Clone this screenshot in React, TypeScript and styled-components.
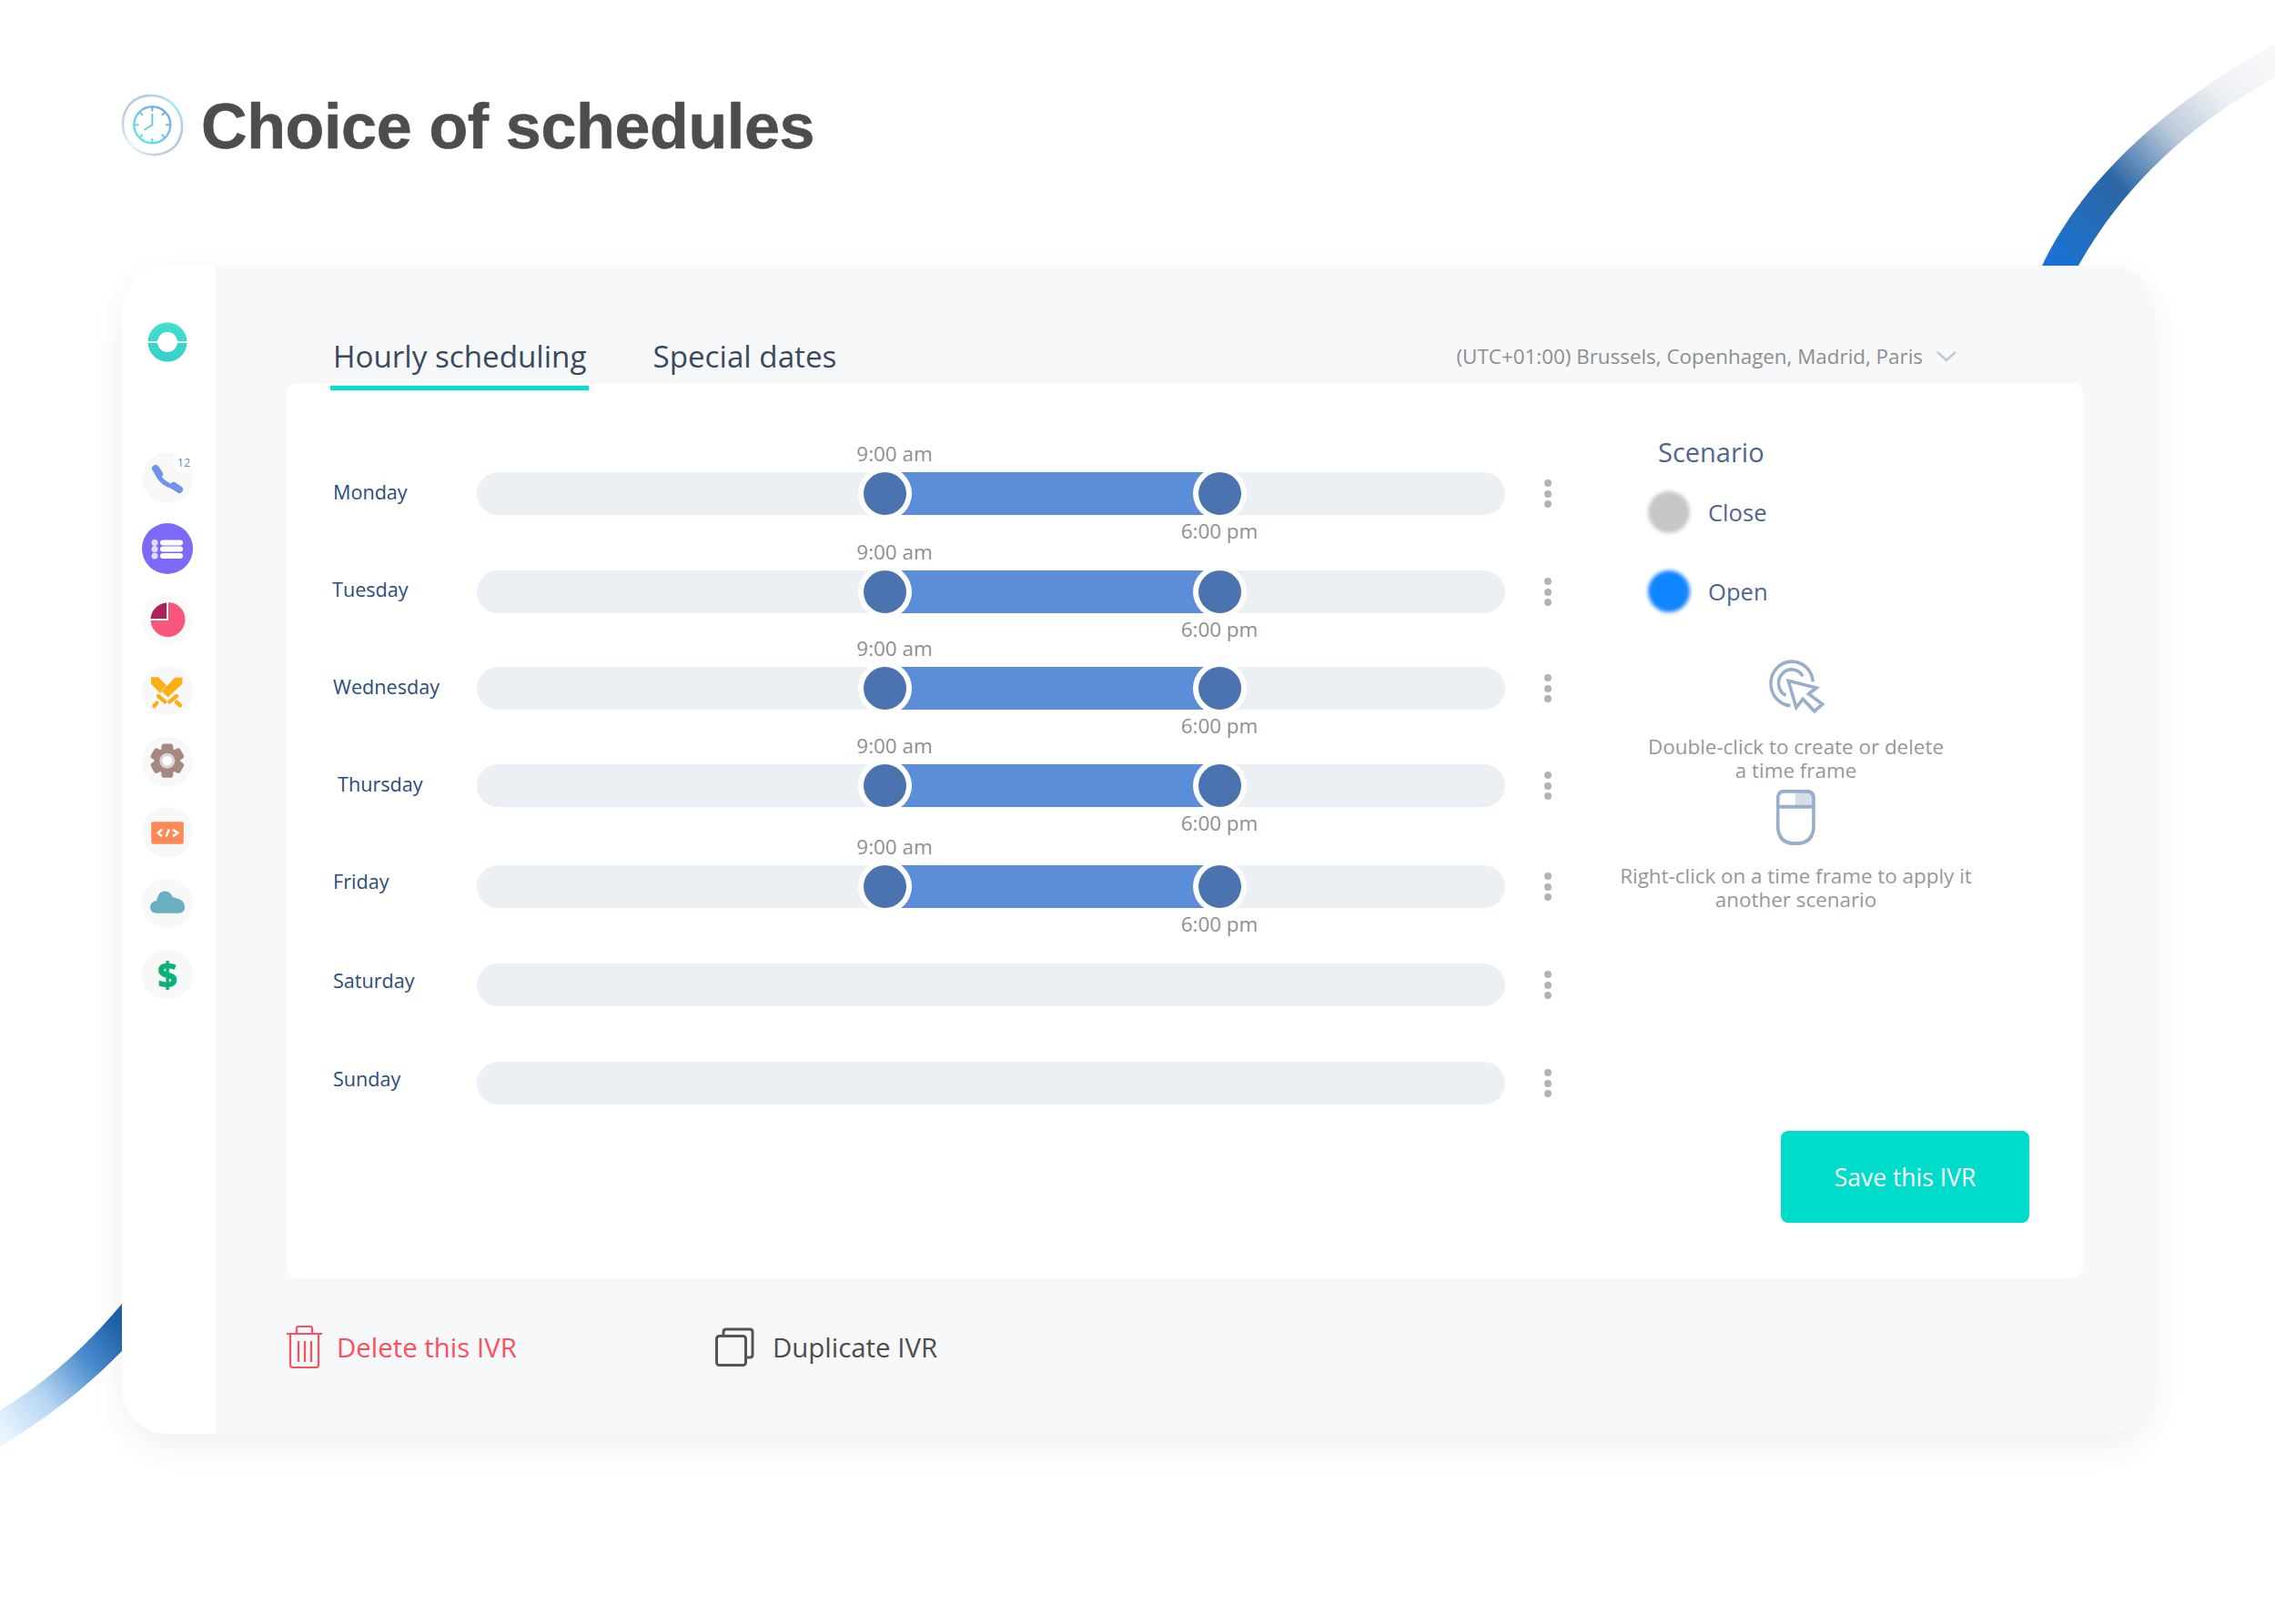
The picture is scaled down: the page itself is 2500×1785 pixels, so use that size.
import styled, { createGlobalStyle } from 'styled-components';

const GlobalStyle = createGlobalStyle`
	html, body {
		margin: 0;
		padding: 0;
		background: #ffffff;
		font-family: 'Open Sans', 'Liberation Sans', sans-serif;
	}
`;

const days = [
	{ name: 'Monday', gap: 0, nudge: 0, lift: 2, open: true },
	{ name: 'Tuesday', gap: 61, nudge: -1, lift: 3, open: true },
	{ name: 'Wednesday', gap: 59, nudge: 0, lift: 2, open: true },
	{ name: 'Thursday', gap: 60, nudge: 5, lift: 2, open: true },
	{ name: 'Friday', gap: 64, nudge: 0, lift: 6, open: true },
	{ name: 'Saturday', gap: 61, nudge: 0, lift: 5, open: false },
	{ name: 'Sunday', gap: 61, nudge: 0, lift: 5, open: false },
];

const Page = styled.div`
	position: relative;
	width: 2500px;
	height: 1785px;
	overflow: hidden;
	padding: 102px 0 0 132px;
	box-sizing: border-box;
	background: #ffffff;
`;

const Swoosh = styled.svg`
	position: absolute;
	left: 0;
	top: 0;
`;

const Header = styled.header`
	position: relative;
	display: flex;
	align-items: center;
	gap: 18px;
	height: 71px;
`;

const Title = styled.h1`
	margin: 3px 0 0;
	font-family: 'Liberation Sans', Arial, sans-serif;
	font-size: 70px;
	font-weight: 700;
	letter-spacing: -0.35px;
	-webkit-text-stroke: 0.6px #4d4d4d;
	color: #4d4d4d;
	line-height: 71px;
`;

const Card = styled.div`
	position: relative;
	display: flex;
	width: 2233px;
	height: 1284px;
	margin: 119px 0 0 2px;
	border-radius: 50px;
	overflow: hidden;
	background: #f7f8fa;
	box-shadow: 0 14px 36px rgba(40, 50, 70, 0.07);
`;

const Sidebar = styled.nav`
	width: 103px;
	flex-shrink: 0;
	display: flex;
	flex-direction: column;
	align-items: center;
	padding: 62px 3px 0 0;
	background: #ffffff;
	box-sizing: border-box;
`;

const Logo = styled.svg`
	width: 44px;
	height: 44px;
	margin-bottom: 99px;
`;

const NavList = styled.div`
	display: flex;
	flex-direction: column;
	align-items: center;
	gap: 22px;
`;

const Bubble = styled.div<{ $bg?: string }>`
	position: relative;
	width: 56px;
	height: 56px;
	border-radius: 50%;
	background: ${(p) => p.$bg || '#f8f8f8'};
	display: flex;
	align-items: center;
	justify-content: center;
	svg {
		display: block;
	}
`;

const Badge = styled.span`
	position: absolute;
	top: 1px;
	right: -1px;
	width: 22px;
	height: 22px;
	border-radius: 50%;
	background: #ffffff;
	color: #5f86e4;
	font-size: 12.5px;
	line-height: 22px;
	text-align: center;
`;

const DollarGlyph = styled.span`
	font-family: 'Open Sans', sans-serif;
	font-weight: 800;
	font-size: 38px;
	line-height: 56px;
	color: #0cb17a;
`;

const Main = styled.main`
	flex: 1;
	min-width: 0;
	display: flex;
	flex-direction: column;
	padding: 0 78px;
`;

const TabBar = styled.div`
	display: flex;
	align-items: center;
	height: 129px;
	padding: 70px 138px 0 51px;
	box-sizing: border-box;
`;

const Tab = styled.div<{ $active?: boolean }>`
	position: relative;
	font-size: 33.2px;
	line-height: 44px;
	color: #3a4a5e;
	margin-right: 73px;
	&::after {
		content: '';
		display: ${(p) => (p.$active ? 'block' : 'none')};
		position: absolute;
		z-index: 2;
		left: -3px;
		right: -3px;
		top: 54px;
		height: 5px;
		background: #00e0d0;
	}
`;

const Timezone = styled.div`
	margin-left: auto;
	display: flex;
	align-items: center;
	gap: 14px;
	font-size: 22.4px;
	color: #8e8e8e;
`;

const Panel = styled.section`
	position: relative;
	display: flex;
	height: 984px;
	background: #ffffff;
	border-radius: 12px;
	padding: 0 59px 61px 50px;
	box-sizing: border-box;
`;

const Rows = styled.div`
	width: 1352px;
	flex-shrink: 0;
	padding-top: 98px;
`;

const Row = styled.div<{ $gap: number }>`
	display: flex;
	align-items: center;
	height: 47px;
	margin-top: ${(p) => p.$gap}px;
`;

const DayLabel = styled.div<{ $nudge: number; $lift: number }>`
	width: 159px;
	flex-shrink: 0;
	padding-left: ${(p) => 1 + p.$nudge}px;
	padding-bottom: ${(p) => p.$lift * 2}px;
	box-sizing: border-box;
	font-size: 21.6px;
	color: #2a4d7a;
`;

const Track = styled.div`
	position: relative;
	width: 1130px;
	height: 47px;
	border-radius: 24px;
	background: #ebf0f4;
`;

const Fill = styled.div`
	position: absolute;
	left: 448px;
	width: 368px;
	top: 0;
	bottom: 0;
	background: #5b8dd9;
`;

const Thumb = styled.div<{ $left: number }>`
	position: absolute;
	left: ${(p) => p.$left}px;
	top: 50%;
	width: 47px;
	height: 47px;
	margin: -23.5px 0 0 -23.5px;
	border-radius: 50%;
	background: #4a73b0;
	box-shadow: 0 0 0 6px #ffffff;
`;

const TimeLabel = styled.span<{ $left: number; $top: number }>`
	position: absolute;
	left: ${(p) => p.$left}px;
	top: ${(p) => p.$top}px;
	transform: translateX(-50%);
	font-size: 22.4px;
	line-height: 28px;
	color: #8f8f8f;
	white-space: nowrap;
`;

const Dots = styled.div`
	display: flex;
	flex-direction: column;
	gap: 3.5px;
	margin-left: 43px;
	span {
		width: 8px;
		height: 8px;
		border-radius: 50%;
		background: #b3b3b3;
	}
`;

const Aside = styled.aside`
	flex: 1;
	min-width: 0;
	display: flex;
	flex-direction: column;
	padding-top: 56px;
`;

const ScenarioTitle = styled.h2`
	margin: 0 0 22px;
	padding-left: 105px;
	font-size: 29px;
	font-weight: 400;
	line-height: 40px;
	color: #4f668c;
`;

const Legend = styled.div<{ $gap: number }>`
	display: flex;
	align-items: center;
	gap: 20px;
	height: 48px;
	margin-bottom: ${(p) => p.$gap}px;
	padding-left: 94px;
	font-size: 25.6px;
	color: #4f668c;
`;

const LegendDot = styled.span<{ $color: string }>`
	width: 46px;
	height: 46px;
	border-radius: 50%;
	background: ${(p) => p.$color};
	filter: blur(2px);
`;

const HintIcon = styled.div`
	display: flex;
	justify-content: center;
	svg {
		display: block;
	}
`;

const Hint = styled.p<{ $top: number; $bottom: number }>`
	margin: ${(p) => p.$top}px 0 ${(p) => p.$bottom}px;
	text-align: center;
	font-size: 22.4px;
	line-height: 25.5px;
	color: #979797;
`;

const SaveButton = styled.button`
	align-self: flex-end;
	margin-top: auto;
	width: 273px;
	height: 101px;
	border: 0;
	border-radius: 8px;
	background: #00dccb;
	color: #ffffff;
	font-family: inherit;
	font-size: 26.5px;
	font-weight: 500;
`;

const Footer = styled.footer`
	display: flex;
	align-items: center;
	height: 151px;
`;

const FooterAction = styled.div<{ $color: string; $gap: number; $width?: number }>`
	display: flex;
	align-items: center;
	gap: ${(p) => p.$gap}px;
	width: ${(p) => (p.$width ? `${p.$width}px` : 'auto')};
	font-size: 29.4px;
	color: ${(p) => p.$color};
`;

const Backdrop = () => (
	<Swoosh width={2500} height={1785} viewBox="0 0 2500 1785">
		<defs>
			<linearGradient id="swooshTop" gradientUnits="userSpaceOnUse" x1="2250" y1="290" x2="2490" y2="60">
				<stop offset="0" stopColor="#1874d6" />
				<stop offset="0.35" stopColor="#2c66a5" />
				<stop offset="0.6" stopColor="#bccbda" />
				<stop offset="0.8" stopColor="#edf0f4" />
				<stop offset="1" stopColor="#f7f8fa" />
			</linearGradient>
			<linearGradient id="swooshBottom" gradientUnits="userSpaceOnUse" x1="0" y1="1570" x2="134" y2="1460">
				<stop offset="0" stopColor="#e9f4fe" />
				<stop offset="0.35" stopColor="#b5d4f1" />
				<stop offset="0.7" stopColor="#4a8ccd" />
				<stop offset="1" stopColor="#1f62aa" />
			</linearGradient>
		</defs>
		<path d="M2244 292 C2285 205 2370 120 2500 48 L2500 85 C2400 140 2330 210 2284 292 Z" fill="url(#swooshTop)" />
		<path d="M0 1550 C50 1520 95 1480 134 1433 L134 1485 C95 1525 50 1560 0 1590 Z" fill="url(#swooshBottom)" />
	</Swoosh>
);

const ClockIcon = () => (
	<svg width={71} height={71} viewBox="0 0 71 71">
		<defs>
			<linearGradient id="ringUpper" gradientUnits="userSpaceOnUse" x1="10" y1="10" x2="61" y2="61">
				<stop offset="0" stopColor="#b7c6dc" />
				<stop offset="0.5" stopColor="#9eeef0" />
				<stop offset="1" stopColor="#b7c6dc" />
			</linearGradient>
			<linearGradient id="ringLower" gradientUnits="userSpaceOnUse" x1="10" y1="10" x2="61" y2="61">
				<stop offset="0" stopColor="#b7c6dc" />
				<stop offset="0.5" stopColor="#e6f5f9" />
				<stop offset="1" stopColor="#b7c6dc" />
			</linearGradient>
			<linearGradient id="faceLine" gradientUnits="userSpaceOnUse" x1="52" y1="20" x2="20" y2="52">
				<stop offset="0" stopColor="#7fa8e8" />
				<stop offset="1" stopColor="#5de8df" />
			</linearGradient>
		</defs>
		<path d="M11.5 11.5 A34 34 0 0 1 59.5 59.5" fill="none" stroke="url(#ringUpper)" strokeWidth="2.6" />
		<path d="M59.5 59.5 A34 34 0 0 1 11.5 11.5" fill="none" stroke="url(#ringLower)" strokeWidth="2.6" />
		<circle cx="35.3" cy="35.3" r="20" fill="none" stroke="url(#faceLine)" strokeWidth="2.4" />
		<path
			d="M35.3 15.5v5M35.3 50v5M15.5 35.3h5M50 35.3h5M21.3 21.3l3.5 3.5M49.3 21.3l-3.5 3.5M21.3 49.3l3.5-3.5M49.3 49.3l-3.5-3.5M35.3 23v12.3l-9 5.5"
			fill="none"
			stroke="url(#faceLine)"
			strokeWidth="2"
		/>
	</svg>
);

const PhoneIcon = () => (
	<svg width={56} height={56} viewBox="0 0 56 56" fill="none" stroke="#6f94ea" strokeLinecap="round">
		<path d="M17 24 Q21 34 36 39" strokeWidth="5" />
		<path d="M15 18 L19 24 M35 37 L41 41" strokeWidth="8" />
	</svg>
);

const ListIcon = () => (
	<svg width={56} height={56} viewBox="0 0 56 56">
		<g fill="#e3ddff">
			<circle cx="14" cy="21.5" r="3.5" />
			<circle cx="14" cy="28.5" r="3.5" />
			<circle cx="14" cy="36" r="3.5" />
		</g>
		<g fill="#ffffff">
			<rect x="20" y="18.5" width="25" height="6" rx="3" />
			<rect x="20" y="25.5" width="25" height="6" rx="3" />
			<rect x="20" y="33" width="25" height="6" rx="3" />
		</g>
	</svg>
);

const PieIcon = () => (
	<svg width={56} height={56} viewBox="0 0 56 56">
		<path d="M29 9 A19 19 0 1 1 9.5 29 L29 29 Z" fill="#f7577a" />
		<path d="M27 9.5 A19 19 0 0 0 9.5 27 L27 27 Z" fill="#ae2258" />
	</svg>
);

const SwordsIcon = () => (
	<svg width={56} height={56} viewBox="6 0 168 168" fill="#fdae14">
		<polygon points="36,40 60,40 92,72 66,92 36,62" />
		<polygon points="140,40 115,40 70,86 92,107 140,62" stroke="#f8f8f8" strokeWidth="2" />
		<g stroke="#fdae14" fill="none" strokeLinecap="round">
			<path d="M60 102 L82 121 M97 121 L120 102" strokeWidth="13" />
			<path d="M46 135 L55 125 M120 122 L132 133" strokeWidth="13" />
		</g>
	</svg>
);

const GearIcon = () => (
	<svg width={56} height={56} viewBox="80 272 165 165">
		<g fill="#a5887f">
			<circle cx="162" cy="352" r="42" />
			<rect x="143" y="297" width="38" height="110" rx="10" />
			<rect x="143" y="297" width="38" height="110" rx="10" transform="rotate(60 162 352)" />
			<rect x="143" y="297" width="38" height="110" rx="10" transform="rotate(120 162 352)" />
		</g>
		<circle cx="162" cy="352" r="25" fill="#dbd2cf" />
		<circle cx="162" cy="352" r="16" fill="#ffffff" />
	</svg>
);

const CodeIcon = () => (
	<svg width={56} height={56} viewBox="82 502 165 165">
		<rect x="112" y="550" width="105" height="72" rx="6" fill="#ff8a57" />
		<path d="M147 575 L134 586 L147 597 M182 575 L198 586 L182 597 M160 598 L170 574" fill="none" stroke="#ffffff" strokeWidth="7" />
	</svg>
);

const CloudIcon = () => (
	<svg width={56} height={56} viewBox="78 738 165 165">
		<path
			d="M124 852 C98 852 98 814 126 812 C128 792 140 780 152 781 C164 781 174 790 176 798 C184 806 214 802 217 832 C217 844 208 852 196 852 Z"
			fill="#6bb0c0"
		/>
	</svg>
);

const CursorIcon = () => (
	<svg width={62} height={60} viewBox="615 735 195 180" preserveAspectRatio="none" fill="none" stroke="#98aecb" strokeWidth="11">
		<path d="M770 808 A73 73 0 1 0 692 887" />
		<path d="M735 790 A45 45 0 1 0 676 853" />
		<path d="M685 805 L782 828 L755 848 L803 882 L775 905 L735 865 L712 893 Z" fill="#ffffff" />
	</svg>
);

const MouseIcon = () => (
	<svg width={43} height={61} viewBox="650 1145 128 170" preserveAspectRatio="none" fill="none" stroke="#98aecb" strokeWidth="11">
		<path d="M712 1150 H745 Q772 1150 772 1177 V1197 H712 Z" fill="#d5dfec" stroke="none" />
		<path d="M655 1197 H772" />
		<path d="M677 1150 H750 Q772 1150 772 1172 V1255 Q772 1310 713 1310 Q655 1310 655 1255 V1172 Q655 1150 677 1150 Z" />
	</svg>
);

const TrashIcon = () => (
	<svg width={39} height={47} viewBox="0 0 39 47" fill="none" stroke="#ff4f5e" strokeWidth="2.2">
		<path d="M0 9 H39 M11 9 V3 Q11 1 13 1 H26 Q28 1 28 3 V9" />
		<path d="M4 9 V43 Q4 46 7 46 H32 Q35 46 35 43 V9" />
		<path d="M13 17 V40 M20 17 V40 M27 17 V40" />
	</svg>
);

const CopyIcon = () => (
	<svg width={43} height={43} viewBox="0 0 43 43" fill="none" stroke="#555555" strokeWidth="3">
		<rect x="1.5" y="9.5" width="32" height="32" rx="3" />
		<path d="M9 8 V5 Q9 2 12 2 H38 Q41 2 41 5 V30 Q41 33 38 33 H35" />
	</svg>
);

export default function App() {
	return (
		<>
			<GlobalStyle />
			<Page>
				<Backdrop />
				<Header>
					<ClockIcon />
					<Title>Choice of schedules</Title>
				</Header>
				<Card>
					<Sidebar>
						<Logo viewBox="0 0 44 44">
							<defs>
								<linearGradient id="logoFill" gradientUnits="userSpaceOnUse" x1="0" y1="0" x2="0" y2="44">
									<stop offset="0" stopColor="#45dfcd" />
									<stop offset="1" stopColor="#35d0cb" />
								</linearGradient>
							</defs>
							<circle cx="22" cy="22" r="16.2" fill="none" stroke="url(#logoFill)" strokeWidth="10.6" />
							<rect x="0" y="21" width="44" height="2" fill="#ffffff" />
						</Logo>
						<NavList>
							<Bubble>
								<PhoneIcon />
								<Badge>12</Badge>
							</Bubble>
							<Bubble $bg="#7d69f7">
								<ListIcon />
							</Bubble>
							<Bubble $bg="#fafafa">
								<PieIcon />
							</Bubble>
							<Bubble>
								<SwordsIcon />
							</Bubble>
							<Bubble>
								<GearIcon />
							</Bubble>
							<Bubble>
								<CodeIcon />
							</Bubble>
							<Bubble>
								<CloudIcon />
							</Bubble>
							<Bubble>
								<DollarGlyph>$</DollarGlyph>
							</Bubble>
						</NavList>
					</Sidebar>
					<Main>
						<TabBar>
							<Tab $active>Hourly scheduling</Tab>
							<Tab>Special dates</Tab>
							<Timezone>
								(UTC+01:00) Brussels, Copenhagen, Madrid, Paris
								<svg width={24} height={12} viewBox="0 0 24 12" fill="none" stroke="#c2c8d0" strokeWidth="2.5">
									<path d="M2 1 L12 10 L22 1" />
								</svg>
							</Timezone>
						</TabBar>
						<Panel>
							<Rows>
								{days.map((day) => (
									<Row key={day.name} $gap={day.gap}>
										<DayLabel $nudge={day.nudge} $lift={day.lift}>
											{day.name}
										</DayLabel>
										<Track>
											{day.open && (
												<>
													<Fill />
													<Thumb $left={448} />
													<Thumb $left={816} />
													<TimeLabel $left={459} $top={-34}>
														9:00 am
													</TimeLabel>
													<TimeLabel $left={816} $top={51}>
														6:00 pm
													</TimeLabel>
												</>
											)}
										</Track>
										<Dots>
											<span />
											<span />
											<span />
										</Dots>
									</Row>
								))}
							</Rows>
							<Aside>
								<ScenarioTitle>Scenario</ScenarioTitle>
								<Legend $gap={39}>
									<LegendDot $color="#c6c6c6" />
									Close
								</Legend>
								<Legend $gap={51}>
									<LegendDot $color="#0f85ff" />
									Open
								</Legend>
								<HintIcon>
									<CursorIcon />
								</HintIcon>
								<Hint $top={23} $bottom={9}>
									Double-click to create or delete
									<br />a time frame
								</Hint>
								<HintIcon>
									<MouseIcon />
								</HintIcon>
								<Hint $top={21} $bottom={0}>
									Right-click on a time frame to apply it
									<br />
									another scenario
								</Hint>
								<SaveButton>Save this IVR</SaveButton>
							</Aside>
						</Panel>
						<Footer>
							<FooterAction $color="#ff4f5e" $gap={16} $width={471}>
								<TrashIcon />
								Delete this IVR
							</FooterAction>
							<FooterAction $color="#4d4d4d" $gap={20}>
								<CopyIcon />
								Duplicate IVR
							</FooterAction>
						</Footer>
					</Main>
				</Card>
			</Page>
		</>
	);
}
